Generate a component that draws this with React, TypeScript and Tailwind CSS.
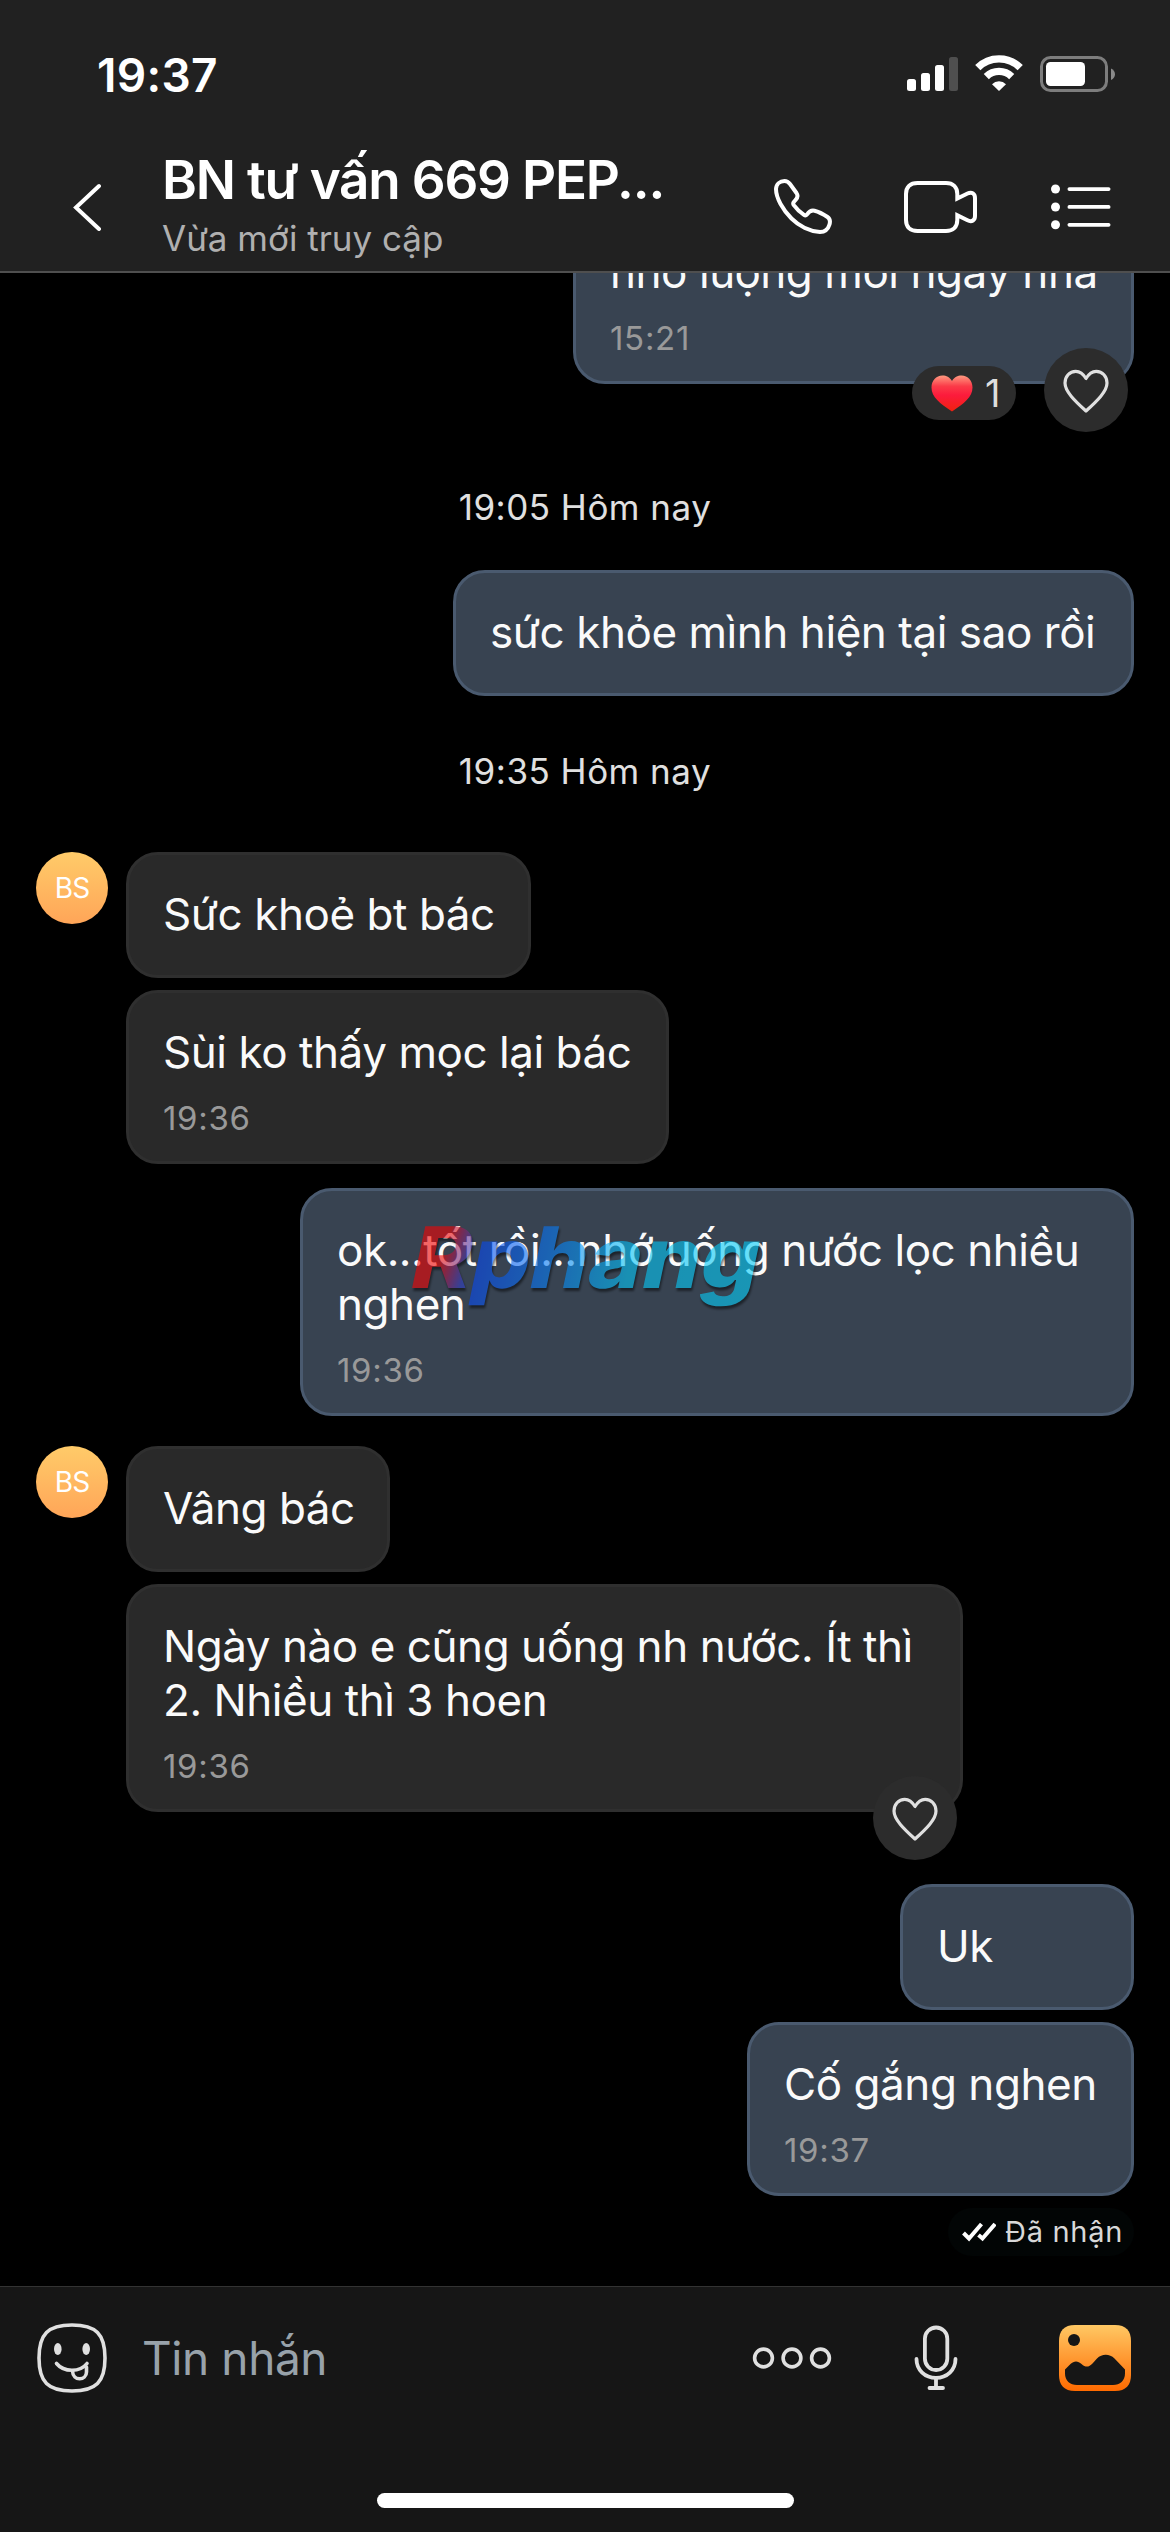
type Reaction = { count?: number };

type Message = {
  text: string[];
  time?: string;
  box: string;
  like?: boolean;
  reaction?: Reaction;
  watermark?: boolean;
};

const StatusBar = () => (
  <div className="flex h-[147px] items-start justify-between pl-[97px] pr-[55px]">
    <span className="mt-[48px] text-[46px] leading-[54px] font-semibold tracking-[0.3px]">
      19:37
    </span>
    <div className="mt-[55px] flex items-start">
      <svg width="51" height="37" viewBox="0 0 51 37" fill="#fff">
        <rect x="0" y="24" width="9" height="12" rx="2.5" />
        <rect x="14" y="18" width="9" height="18" rx="2.5" />
        <rect x="28" y="10" width="9" height="26" rx="2.5" />
        <rect x="42" y="2" width="9" height="34" rx="2.5" fill="#4f4f4f" />
      </svg>
      <svg className="ml-[17px]" width="48" height="37" viewBox="0 0 48 37" fill="none">
        <path d="M2.8 12.6A30 30 0 0 1 45.2 12.6" stroke="#fff" strokeWidth="7.4" />
        <path d="M11.3 21.6A18 18 0 0 1 36.7 21.6" stroke="#fff" strokeWidth="7.2" />
        <path d="M17 29.2A10 10 0 0 1 31 29.2L24 36Z" fill="#fff" />
      </svg>
      <svg className="ml-[17px]" width="75" height="38" viewBox="0 0 75 38" fill="none">
        <rect x="1.5" y="2.5" width="65" height="33" rx="9" stroke="#7d7d7d" strokeWidth="3" />
        <rect x="6" y="7" width="39" height="24" rx="4.5" fill="#fff" />
        <path d="M71 13.5C76.3 16 76.3 22.5 71 25Z" fill="#8a8a8a" />
      </svg>
    </div>
  </div>
);

const Header = () => (
  <header className="relative z-10 h-[273px] border-b-2 border-[#4f4f4f] bg-[#212121]">
    <StatusBar />
    <div className="flex items-start pl-[72px]">
      <svg className="mt-[36px]" width="30" height="48" viewBox="0 0 30 48" fill="none">
        <path d="M27 3L4 24.5L27 46" stroke="#fff" strokeWidth="4" strokeLinecap="round" />
      </svg>
      <div className="ml-[60px] w-[520px] whitespace-nowrap">
        <h1 className="text-[53px] leading-[66px] font-semibold tracking-[-1.2px]">
          BN tư vấn 669 PEP...
        </h1>
        <p className="mt-[3px] text-[35px] leading-[44px] text-[#b0b0b0]">
          Vừa mới truy cập
        </p>
      </div>
      <svg className="mt-[31px] ml-[91px]" width="60" height="60" viewBox="0 0 60 60" fill="none">
        <path
          d="M3 11C3.2 6 7 3 11.5 3C14 3 15.5 4 17 6L23.5 15C25.5 18 24.5 20 22.5 22L20.8 24C20 25 20 26 20.800 27.200C23.5 31 27 34.3 31.3 37.2C32.5 38 33 37.7 34 36.5C36 33.5 38.5 32 41.5 32.7C46 33.8 50 36 54.5 39C57 40.7 57.5 43 56.5 46.5C55 51.5 51.5 54 47 54C37 53.5 26 48 18.5 40.5C10 32 3 20 3 11Z"
          stroke="#fff"
          strokeWidth="4"
          strokeLinejoin="round"
        />
      </svg>
      <svg className="mt-[33px] ml-[71px]" width="76" height="54" viewBox="0 0 76 54" fill="none">
        <path
          d="M53.3 18.6V14C53.3 7 49 3 42 3H13.5C6 3 2 7 2 14V40C2 47 6 51 13.5 51H42C49 51 53.3 47 53.3 40V35.2L63.5 40.3C68 42.5 71 40 71 36V18C71 14 68 11.4 63.5 13.5Z"
          stroke="#fff"
          strokeWidth="4"
        />
      </svg>
      <svg className="mt-[36px] ml-[71px]" width="60" height="48" viewBox="0 0 60 48" fill="#fff">
        <circle cx="4.5" cy="6" r="4.5" />
        <circle cx="4.5" cy="24" r="4.5" />
        <circle cx="4.5" cy="41.8" r="4.5" />
        <rect x="16.5" y="4.2" width="43" height="3.8" rx="1.9" />
        <rect x="16.5" y="22" width="43" height="3.8" rx="1.9" />
        <rect x="16.5" y="39.9" width="43" height="3.8" rx="1.9" />
      </svg>
    </div>
  </header>
);

const LikeButton = ({ className }: { className: string }) => (
  <button
    className={`absolute flex size-[84px] items-center justify-center rounded-full bg-[#2c2c2c] ${className}`}
  >
    <svg className="mt-[2px]" width="46" height="44" viewBox="0 0 46 44" fill="none">
      <path
        d="M23 9.5C20 4.5 16.5 2.3 12.8 2.3C6.5 2.3 2 7.5 2 14C2 22.5 12 32 23 42C34 32 44 22.5 44 14C44 7.5 39.5 2.3 33.2 2.3C29.5 2.3 26 4.5 23 9.5Z"
        stroke="#e0e0e0"
        strokeWidth="3.2"
        strokeLinejoin="round"
      />
    </svg>
  </button>
);

const ReactionPill = ({ count }: Reaction) => (
  <div className="absolute top-[153px] left-[336px] flex h-[54px] w-[104px] items-center rounded-full bg-[#2c2c2c] pl-[19px]">
    <svg width="42" height="37" viewBox="0 0 42 37">
      <defs>
        <linearGradient id="heart" x1="0" y1="0" x2="0" y2="1">
          <stop offset="0" stopColor="#ff9a80" />
          <stop offset="0.3" stopColor="#fb3a48" />
          <stop offset="0.55" stopColor="#fc1b3c" />
          <stop offset="1" stopColor="#f0210f" />
        </linearGradient>
      </defs>
      <path
        d="M21 6C18.5 2 15.5 .5 11.5 .5C5 .5 .5 5.5 .5 12.5C.5 22 9 28.5 21 36.5C33 28.5 41.5 22 41.5 12.5C41.5 5.5 37 .5 30.5 .5C26.5 .5 23.5 2 21 6Z"
        fill="url(#heart)"
      />
    </svg>
    <span className="ml-[12px] text-[38px] leading-[54px] text-[#dedede]">{count}</span>
  </div>
);

const Watermark = () => (
  <svg
    className="absolute top-[15px] left-[95px] opacity-60 drop-shadow-[1px_3px_1px_rgba(0,0,0,0.8)]"
    width="380"
    height="120"
    viewBox="0 0 380 120"
  >
    <defs>
      <linearGradient id="brandR" x1="0" y1="0" x2="1" y2="0.2">
        <stop offset="0.55" stopColor="#f20303" />
        <stop offset="1" stopColor="#3040c8" />
      </linearGradient>
      <linearGradient id="brandRest" x1="0" y1="0" x2="1" y2="0">
        <stop offset="0" stopColor="#0846f0" />
        <stop offset="0.25" stopColor="#0878f4" />
        <stop offset="0.55" stopColor="#06c4f4" />
        <stop offset="1" stopColor="#06cdf8" />
      </linearGradient>
    </defs>
    <g className="font-['Inter'] text-[85px] font-extrabold">
      <text
        transform="translate(9 82) skewX(-12)"
        textLength="60"
        lengthAdjust="spacingAndGlyphs"
        fill="url(#brandR)"
      >
        R
      </text>
      <text
        transform="translate(69 82) skewX(-12)"
        textLength="288"
        lengthAdjust="spacingAndGlyphs"
        fill="url(#brandRest)"
      >
        phang
      </text>
    </g>
  </svg>
);

const Bubble = ({ message, mine }: { message: Message; mine?: boolean }) => (
  <div
    className={`relative shrink-0 rounded-[32px] border-[3px] pt-[32px] pl-[34px] text-[#fafafa] ${
      mine ? "self-end border-[#4a5a6f] bg-[#384351]" : "border-[#2f2f2f] bg-[#292929]"
    } ${message.box}`}
  >
    {message.text.map((line) => (
      <p key={line} className="text-[44px] leading-[54px] tracking-[-0.45px] whitespace-nowrap">
        {line}
      </p>
    ))}
    {message.time && (
      <p className="mt-[21px] text-[33px] leading-[36px] tracking-[0.7px] text-[#999]">
        {message.time}
      </p>
    )}
    {message.reaction && <ReactionPill {...message.reaction} />}
    {message.like && <LikeButton className="right-[3px] bottom-[-51px]" />}
    {message.watermark && <Watermark />}
  </div>
);

const DateLabel = ({ text, className }: { text: string; className: string }) => (
  <p
    className={`shrink-0 text-center text-[35px] leading-[42px] tracking-[0.5px] text-[#e0e0e0] ${className}`}
  >
    {text}
  </p>
);

const Received = ({ messages }: { messages: Message[] }) => (
  <div className="flex items-start gap-[18px]">
    <div className="flex size-[72px] items-center justify-center rounded-full bg-linear-to-b from-[#ffcb69] to-[#ffa558] text-[28px] tracking-[-1px] text-white">
      BS
    </div>
    <div className="flex flex-col gap-3">
      {messages.map((m) => (
        <Bubble key={m.text[0]} message={m} />
      ))}
    </div>
  </div>
);

const Composer = () => (
  <footer className="relative h-[246px] border-t border-[#333] bg-[#161616]">
    <div className="flex h-[142px] items-center pr-[39px] pl-[36px]">
      <svg width="72" height="72" viewBox="0 0 72 72" fill="none" stroke="#e0e0e0" strokeLinecap="round">
        <path
          d="M36 3C12 3 3 12 3 36C3 60 12 69 36 69C60 69 69 60 69 36C69 12 60 3 36 3Z"
          strokeWidth="3.6"
        />
        <ellipse cx="21.8" cy="27" rx="3.8" ry="6" fill="#e0e0e0" stroke="none" />
        <ellipse cx="50.2" cy="27" rx="3.8" ry="6" fill="#e0e0e0" stroke="none" />
        <path d="M20.5 41.5C28 50.5 44 50.5 51 41.5" strokeWidth="3.6" />
        <path d="M36.5 49C37 60 50.5 58.5 50.5 50V45" strokeWidth="3.6" />
      </svg>
      <span className="ml-[34px] text-[46px] leading-[56px] tracking-[-0.4px] text-[#98a2aa]">
        Tin nhắn
      </span>
      <div className="ml-auto flex items-center">
        <svg width="80" height="24" viewBox="0 0 80 24" fill="none" stroke="#e0e0e0" strokeWidth="3.6">
          <circle cx="11.5" cy="12" r="8.9" />
          <circle cx="40" cy="12" r="8.9" />
          <circle cx="68.5" cy="12" r="8.9" />
        </svg>
        <svg
          className="ml-[82px]"
          width="44"
          height="66"
          viewBox="0 0 44 66"
          fill="none"
          stroke="#e0e0e0"
          strokeWidth="3.8"
          strokeLinecap="round"
        >
          <rect x="10.9" y="2.5" width="22.4" height="42.5" rx="11.2" />
          <path d="M2.5 34C2.5 45 11 52.8 22 52.8C33 52.8 41.5 45 41.5 34" />
          <path d="M22 53V63M15.5 63H29" />
        </svg>
        <svg className="ml-[101px]" width="72" height="66" viewBox="0 0 72 66">
          <defs>
            <linearGradient id="photo" x1="0" y1="0" x2="0" y2="1">
              <stop offset="0" stopColor="#ffc864" />
              <stop offset="1" stopColor="#ff6a00" />
            </linearGradient>
          </defs>
          <path
            d="M16 0H56C67 0 72 6 72 16V50C72 60 67 66 56 66H16C5 66 0 60 0 50V16C0 6 5 0 16 0Z"
            fill="url(#photo)"
          />
          <circle cx="15" cy="15" r="6" fill="#161616" />
          <path
            d="M6 44.5L11.5 39C15 35.5 19 35.5 22.5 39C27 43 30 42 33.5 38.5L38 33.5C43 28.5 50.5 28.5 55.5 33.5L66 44.5V48.5C66 55.5 61 60 54 60H18C11 60 6 55.5 6 48.5Z"
            fill="#161616"
          />
        </svg>
      </div>
    </div>
    <div className="mx-auto mt-[64px] h-[15px] w-[417px] rounded-full bg-white" />
  </footer>
);

export default function App() {
  return (
    <div className="flex h-[2532px] w-[1170px] flex-col overflow-hidden bg-black font-['Inter',sans-serif] text-white">
      <Header />

      {/* Messages */}
      <main className="flex min-h-0 flex-1 flex-col overflow-hidden px-[36px]">
        <Bubble
          mine
          message={{
            text: ["nhỏ lượng mỗi ngày nha"],
            time: "15:21",
            box: "-mt-[63px] h-[174px] w-[561px]",
            like: true,
            reaction: { count: 1 },
          }}
        />
        <DateLabel text="19:05 Hôm nay" className="mt-[102px]" />
        <Bubble
          mine
          message={{ text: ["sức khỏe mình hiện tại sao rồi"], box: "mt-[42px] h-[126px] w-[681px]" }}
        />
        <DateLabel text="19:35 Hôm nay" className="mt-[54px] mb-[60px]" />
        <Received
          messages={[
            { text: ["Sức khoẻ bt bác"], box: "h-[126px] w-[405px]" },
            { text: ["Sùi ko thấy mọc lại bác"], time: "19:36", box: "h-[174px] w-[543px]" },
          ]}
        />
        <Bubble
          mine
          message={{
            text: ["ok...tốt rồi...nhớ uống nước lọc nhiều", "nghen"],
            time: "19:36",
            box: "mt-6 mb-[30px] h-[228px] w-[834px]",
            watermark: true,
          }}
        />
        <Received
          messages={[
            { text: ["Vâng bác"], box: "h-[126px] w-[264px]" },
            {
              text: ["Ngày nào e cũng uống nh nước. Ít thì", "2. Nhiều thì 3 hoen"],
              time: "19:36",
              box: "h-[228px] w-[837px]",
              like: true,
            },
          ]}
        />
        <Bubble mine message={{ text: ["Uk"], box: "mt-[72px] h-[126px] w-[234px]" }} />
        <Bubble
          mine
          message={{ text: ["Cố gắng nghen"], time: "19:37", box: "mt-3 h-[174px] w-[387px]" }}
        />
        <div className="mt-3 flex h-12 w-[186px] shrink-0 items-center self-end rounded-full bg-[#020505] pl-[14px]">
          <svg width="34" height="20" viewBox="0 0 34 20" fill="none" stroke="#fff" strokeWidth="4">
            <path d="M1.5 11L7 16.5L19.5 2" />
            <path d="M16.5 13L20.5 16.5L33 2" />
          </svg>
          <span className="ml-[9px] text-[29px] tracking-[0.7px] whitespace-nowrap text-[#d8d8d8]">
            Đã nhận
          </span>
        </div>
      </main>

      <Composer />
    </div>
  );
}
